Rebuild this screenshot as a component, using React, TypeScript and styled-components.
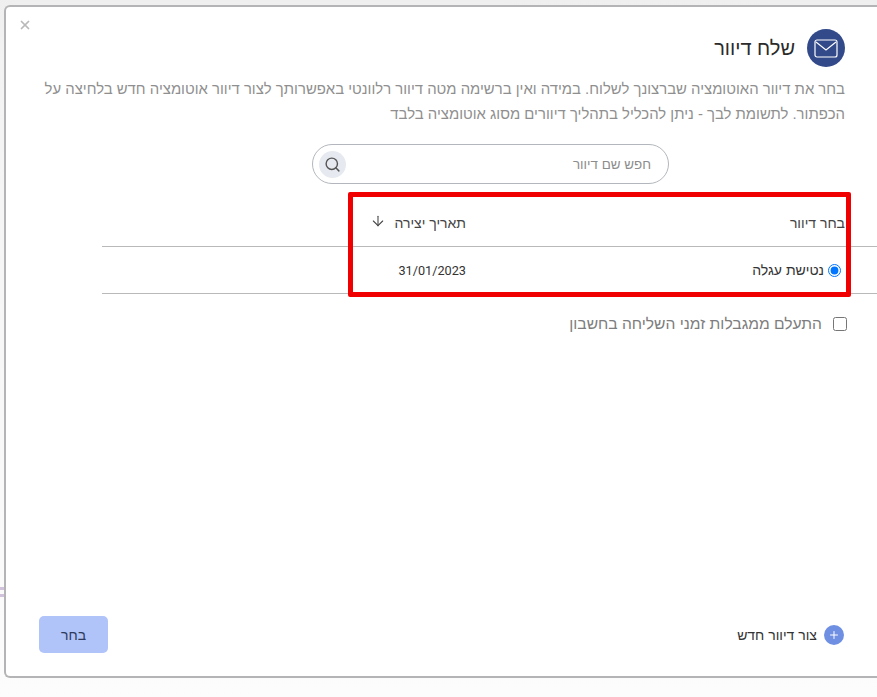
import React from 'react';
import styled, { createGlobalStyle } from 'styled-components';
import { ArrowDown, Plus, Search, X } from 'lucide-react';

const GlobalStyle = createGlobalStyle`
    html, body {
        margin: 0;
        padding: 0;
        width: 877px;
        height: 697px;
        overflow: hidden;
        background: #fafafa;
        font-family: "Liberation Sans", Arial, sans-serif;
    }
`;

const Page = styled.div`
    position: relative;
    width: 877px;
    height: 697px;
    padding: 5px 0 0 4px;
    box-sizing: border-box;
    background: linear-gradient(to bottom, #efeff0 0, #f3f3f3 60px, #fcfcfc 100%);
`;

// bits of the page behind the dialog, showing at its left edge
const BackdropMark = styled.span<{ $top: number }>`
    position: absolute;
    left: 0;
    top: ${(p) => p.$top}px;
    width: 4px;
    height: 3px;
    background: #cfc2da;
`;

const Modal = styled.div`
    position: relative;
    width: 873px;
    height: 673px;
    box-sizing: border-box;
    display: flex;
    flex-direction: column;
    padding: 22px 32px 23px 33px;
    background: #fff;
    border: 2px solid #b4b4b6;
    border-right: none;
    border-radius: 6px 0 0 6px;
`;

const CloseButton = styled.button`
    position: absolute;
    top: 11px;
    left: 12px;
    display: flex;
    padding: 0;
    border: none;
    background: none;
    color: #b9b9b9;
`;

const Header = styled.div`
    display: flex;
    align-items: center;
    gap: 12px;
    height: 38px;
`;

const IconCircle = styled.div`
    width: 38px;
    height: 38px;
    border-radius: 50%;
    background: #32498a;
    display: flex;
    align-items: center;
    justify-content: center;
`;

const Title = styled.h1`
    margin: 0;
    font-size: 20px;
    font-weight: 400;
    color: #2b2b2b;
`;

const Description = styled.p`
    margin: 10px 0 0;
    font-size: 14.88px;
    line-height: 25px;
    color: #8f8f8f;
`;

const SearchBox = styled.div`
    align-self: flex-start;
    width: 357px;
    height: 40px;
    margin: 17px 176px 0 0;
    box-sizing: border-box;
    display: flex;
    align-items: center;
    justify-content: space-between;
    padding: 0 17px 0 6px;
    border: 1px solid #b3b7bd;
    border-radius: 20px;
`;

const SearchInput = styled.input`
    flex: 1;
    border: none;
    outline: none;
    background: none;
    padding: 0;
    font: inherit;
    font-size: 13.4px;
    &::placeholder {
        color: #8c8c8c;
        opacity: 1;
    }
`;

const SearchIcon = styled.div`
    width: 27px;
    height: 27px;
    border-radius: 50%;
    background: #e6e9ef;
    color: #555;
    display: flex;
    align-items: center;
    justify-content: center;
`;

const Table = styled.div`
    margin: 15px -32px 0 0;
    margin-left: 63px;
`;

const Row = styled.div<{ $height: number }>`
    display: grid;
    grid-template-columns: 379px 1fr;
    align-items: center;
    height: ${(p) => p.$height}px;
    padding-right: 32px;
    border-bottom: 1px solid #b9b9b9;
    font-size: 14px;
    color: #333;
`;

const HeaderCell = styled.div`
    display: flex;
    align-items: center;
    gap: 8px;
    color: #444;
`;

const SortArrow = styled(ArrowDown)`
    margin-top: -4px;
`;

const RadioLabel = styled.label`
    display: flex;
    align-items: center;
    gap: 4px;
`;

const Radio = styled.input`
    width: 13px;
    height: 13px;
    margin: 0 4px 0 0;
`;

const DateText = styled.span`
    justify-self: start;
    direction: ltr;
    unicode-bidi: isolate;
    font-family: Roboto, sans-serif;
    font-size: 12.7px;
    color: #333;
`;

const CheckRow = styled.label`
    display: flex;
    align-items: center;
    gap: 11px;
    margin-top: 21px;
    font-size: 15.6px;
    color: #7d7d7d;
`;

const CheckBox = styled.input`
    width: 14px;
    height: 14px;
    margin: 0 -2px 0 0;
`;

const Footer = styled.div`
    margin-top: auto;
    display: flex;
    align-items: center;
    justify-content: space-between;
`;

const CreateLink = styled.div`
    display: flex;
    align-items: center;
    gap: 7px;
    margin-right: 1px;
    font-size: 14px;
    color: #333;
`;

const PlusCircle = styled.div`
    width: 20px;
    height: 20px;
    border-radius: 50%;
    background: #6f8fe3;
    color: #fff;
    display: flex;
    align-items: center;
    justify-content: center;
`;

const SelectButton = styled.button`
    width: 69px;
    height: 37px;
    border: none;
    border-radius: 5px;
    background: #b0c4fa;
    color: #2e3a5c;
    font: inherit;
    font-size: 14px;
`;

// red annotation drawn over the table in the screenshot
const Highlight = styled.div`
    position: absolute;
    left: 342px;
    top: 185px;
    width: 503px;
    height: 105px;
    box-sizing: border-box;
    border: 5px solid #f00000;
    border-radius: 2px;
    pointer-events: none;
`;

const App = () => {
    return (
        <Page>
            <GlobalStyle />
            <BackdropMark $top={587} />
            <BackdropMark $top={594} />
            <Modal dir="rtl">
                <CloseButton>
                    <X size={14} strokeWidth={3} />
                </CloseButton>
                <Header>
                    <IconCircle>
                        <svg width="24" height="19" viewBox="0 0 24 19" fill="none" stroke="#fff" strokeWidth="1.2">
                            <rect x="1" y="1" width="22" height="17" rx="2" />
                            <path d="M2 3l10 8 10-8" />
                        </svg>
                    </IconCircle>
                    <Title>{"שלח דיוור"}</Title>
                </Header>
                <Description>
                    {"בחר את דיוור האוטומציה שברצונך לשלוח. במידה ואין ברשימה מטה דיוור רלוונטי באפשרותך לצור דיוור אוטומציה חדש בלחיצה על הכפתור. לתשומת לבך - ניתן להכליל בתהליך דיוורים מסוג אוטומציה בלבד"}
                </Description>
                <SearchBox>
                    <SearchInput placeholder="חפש שם דיוור" />
                    <SearchIcon>
                        <Search size={17} strokeWidth={2} />
                    </SearchIcon>
                </SearchBox>
                <Table>
                    <Row $height={47}>
                        <HeaderCell>{"בחר דיוור"}</HeaderCell>
                        <HeaderCell>
                            {"תאריך יצירה"}
                            <SortArrow size={16} strokeWidth={1.6} />
                        </HeaderCell>
                    </Row>
                    <Row $height={46}>
                        <RadioLabel>
                            <Radio type="radio" name="mailing" defaultChecked />
                            {"נטישת עגלה"}
                        </RadioLabel>
                        <DateText>31/01/2023</DateText>
                    </Row>
                </Table>
                <CheckRow>
                    <CheckBox type="checkbox" />
                    {"התעלם ממגבלות זמני השליחה בחשבון"}
                </CheckRow>
                <Footer>
                    <CreateLink>
                        <PlusCircle>
                            <Plus size={12} strokeWidth={2} />
                        </PlusCircle>
                        {"צור דיוור חדש"}
                    </CreateLink>
                    <SelectButton>{"בחר"}</SelectButton>
                </Footer>
                <Highlight />
            </Modal>
        </Page>
    );
};

export default App;
